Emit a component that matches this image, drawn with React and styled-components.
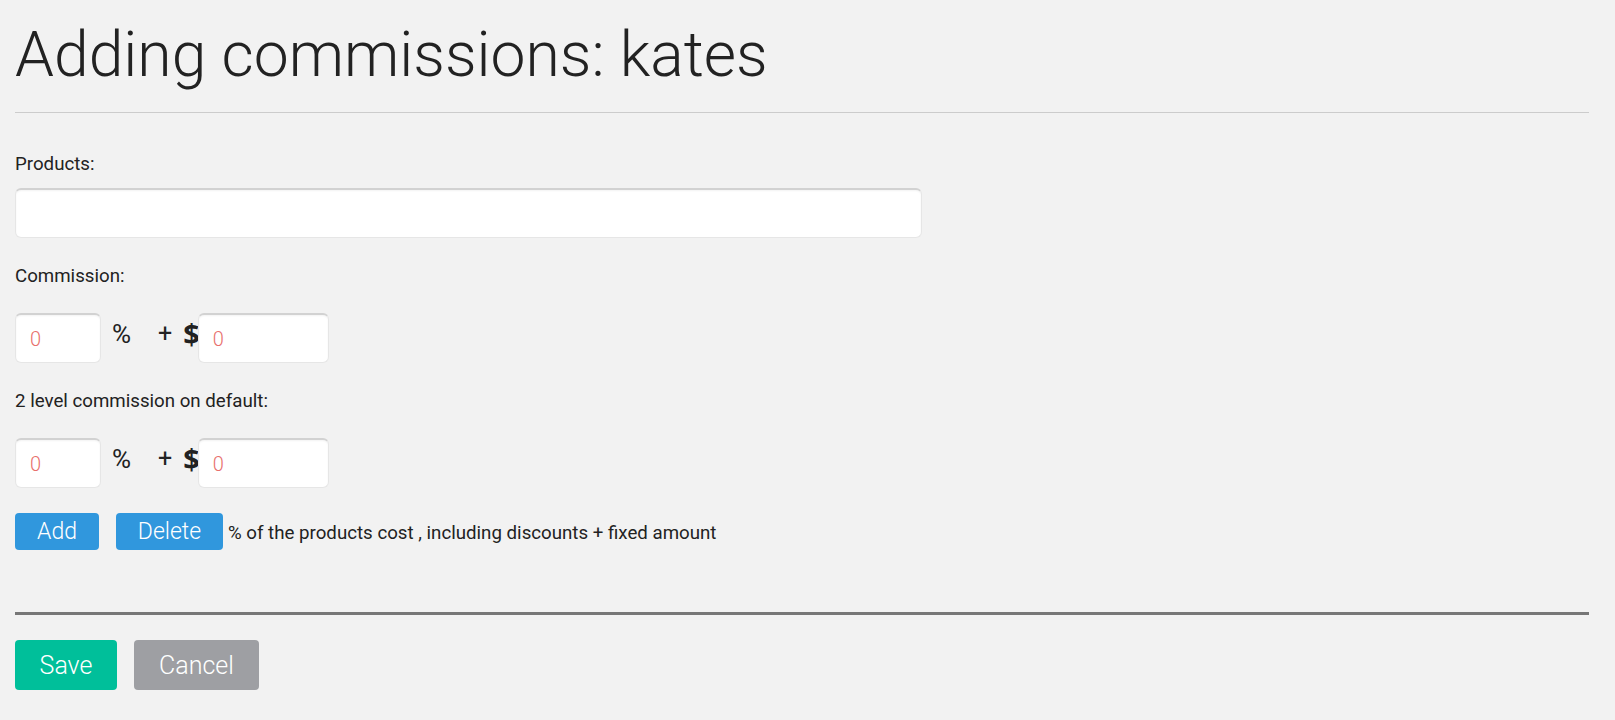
import React from "react";
import styled, { createGlobalStyle } from "styled-components";

const Global = createGlobalStyle`
  html, body { margin: 0; padding: 0; background: #f2f2f2; }
  body { font-family: Roboto, "Noto Sans", sans-serif; color: #222; }
  * { box-sizing: border-box; }
`;

const Page = styled.div`
  padding: 20px 26px 30px 15px;
  display: flex;
  flex-direction: column;
`;

const Title = styled.h1`
  margin: 0 0 22px 0;
  font-size: 62.4px;
  line-height: 70px;
  font-weight: 300;
  color: #222;
`;

const Rule = styled.hr`
  margin: 0;
  border: none;
  height: ${(p) => (p.$thick ? "3px" : "1px")};
  background: ${(p) => (p.$thick ? "#777" : "#ccc")};
`;

const Label = styled.div`
  font-size: 18.7px;
  line-height: 24px;
  color: #222;
  margin-top: ${(p) => p.$top}px;
`;

const TextInput = styled.input`
  display: block;
  width: ${(p) => p.$w}px;
  height: 50px;
  margin-top: ${(p) => p.$top || 0}px;
  margin-left: ${(p) => p.$ml || 0}px;
  background: #fff;
  border: 1px solid #e6e6e6;
  border-top: 2px solid #d2d2d2;
  border-radius: 6px;
  box-shadow: inset 0 1px 2px rgba(0, 0, 0, 0.05);
  padding: 0 14px;
  font-family: Roboto, sans-serif;
  font-size: 20px;
  font-weight: 300;
  color: #222;
  outline: none;
  &::placeholder { color: #e8706c; opacity: 1; }
`;

const AmountRow = styled.div`
  display: flex;
  align-items: center;
  margin-top: 25px;
`;

const Symbol = styled.span`
  line-height: 30px;
  font-weight: ${(p) => (p.$bold ? 700 : 400)};
  font-family: ${(p) => (p.$bold ? '"Open Sans", Roboto, sans-serif' : "Roboto, sans-serif")};
  font-size: ${(p) => p.$fs}px;
  margin-left: ${(p) => p.$ml}px;
  margin-bottom: 9px;
  color: #222;
`;

const ActionRow = styled.div`
  display: flex;
  align-items: center;
  margin-top: 25px;
`;

const Button = styled.button`
  width: ${(p) => p.$w}px;
  height: ${(p) => p.$h}px;
  margin-right: ${(p) => p.$mr || 0}px;
  background: ${(p) => p.$bg};
  color: #fff;
  border: none;
  border-radius: 4px;
  font-family: Roboto, sans-serif;
  font-weight: 300;
  font-size: ${(p) => p.$fs}px;
  padding: 0;
  cursor: pointer;
`;

const Hint = styled.span`
  font-size: 18.7px;
  line-height: 24px;
  color: #222;
  margin-top: 3px;
`;

const Footer = styled.div`
  display: flex;
  margin-top: 25px;
  gap: 17px;
`;

function Amount() {
  return (
    <AmountRow>
      <TextInput $w={86} placeholder="0" />
      <Symbol $ml={11} $fs={26}>%</Symbol>
      <Symbol $ml={27} $fs={25}>+</Symbol>
      <Symbol $ml={11} $fs={29} $bold>$</Symbol>
      <TextInput $w={131} $ml={-2} placeholder="0" />
    </AmountRow>
  );
}

export default function App() {
  return (
    <>
      <Global />
      <Page>
        <Title>Adding commissions: kates</Title>
        <Rule />
        <Label $top={39}>Products:</Label>
        <TextInput $w={907} $top={12} />
        <Label $top={26}>Commission:</Label>
        <Amount />
        <Label $top={26}>2 level commission on default:</Label>
        <Amount />
        <ActionRow>
          <Button $w={84} $h={37} $fs={23} $bg="#3097dd" $mr={17}>Add</Button>
          <Button $w={107} $h={37} $fs={23} $bg="#3097dd" $mr={5}>Delete</Button>
          <Hint>% of the products cost , including discounts + fixed amount</Hint>
        </ActionRow>
        <Rule $thick style={{ marginTop: 62 }} />
        <Footer>
          <Button $w={102} $h={50} $fs={25} $bg="#00bf9a">Save</Button>
          <Button $w={125} $h={50} $fs={25} $bg="#9e9fa3">Cancel</Button>
        </Footer>
      </Page>
    </>
  );
}
